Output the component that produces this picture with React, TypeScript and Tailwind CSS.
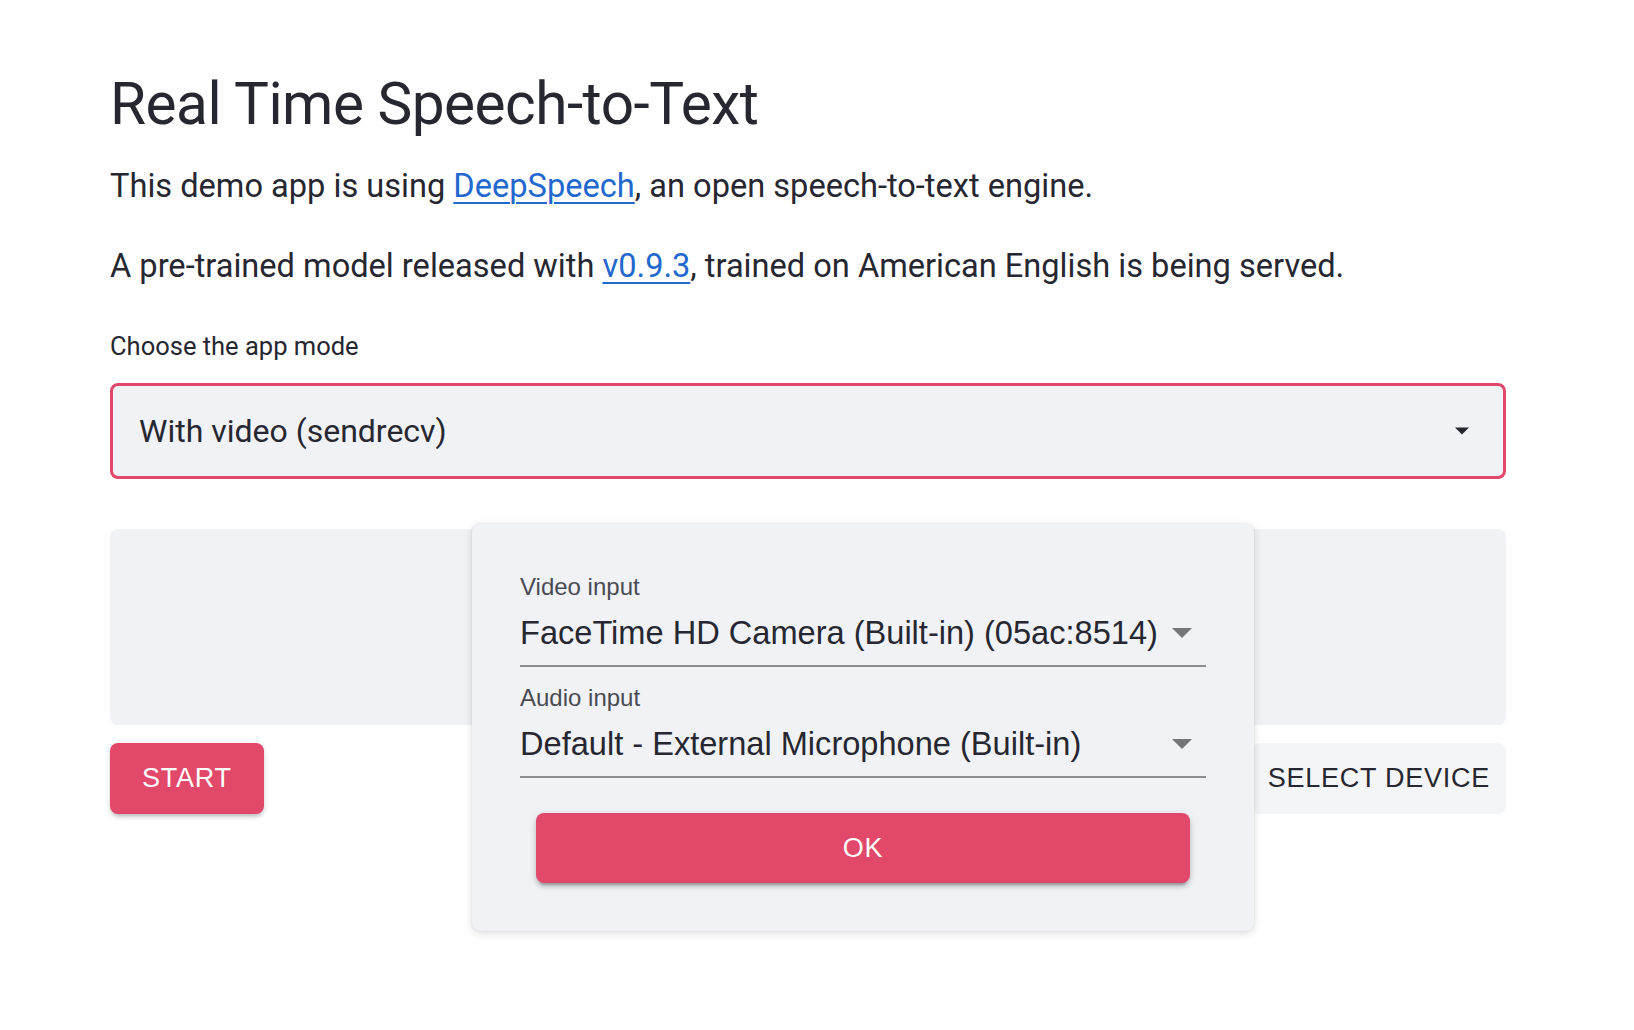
import * as React from 'react'

const plex = { fontFamily: 'Roboto, "Noto Sans", sans-serif' }

function DropArrow({ className }: { className?: string }) {
  return (
    <svg viewBox="7 10 10 5" className={className} aria-hidden>
      <path d="M7 10l5 5 5-5z" fill="currentColor" />
    </svg>
  )
}

function DeviceSelect({ label, value }: { label: string; value: string }) {
  return (
    <div className="flex flex-col">
      <div className="h-[28px] text-[24px] leading-[28px] text-[#4a4b52]">{label}</div>
      <div className="flex h-[66px] items-center justify-between border-b-2 border-[#8d8e92] pr-[14px]">
        <span className="text-[32.6px] leading-none text-[#262730]">{value}</span>
        <DropArrow className="h-[10px] w-[20px] text-[#75767a]" />
      </div>
    </div>
  )
}

export default function App() {
  return (
    <div className="min-h-[1030px] w-full bg-white text-[#262730]" style={plex}>
      <div className="relative ml-[110px] w-[1396px] pt-[68px]">
        <h1 className="text-[58.5px] font-normal leading-[72px] tracking-[-0.5px]">
          Real Time Speech-to-Text
        </h1>

        <p className="mt-[22px] text-[32.6px] leading-[48px]">
          This demo app is using{' '}
          <a href="#" className="text-[#2268cf] underline decoration-[2px] underline-offset-[5px]">
            DeepSpeech
          </a>
          , an open speech-to-text engine.
        </p>

        <p className="mt-[32px] text-[32.6px] leading-[48px]">
          A pre-trained model released with{' '}
          <a href="#" className="text-[#2268cf] underline decoration-[2px] underline-offset-[5px]">
            v0.9.3
          </a>
          , trained on American English is being served.
        </p>

        <div className="mt-[36px] text-[25.5px] leading-[40px]">Choose the app mode</div>

        <div className="mt-[17px] flex h-[96px] items-center justify-between rounded-[8px] border-[3px] border-[#e1486a] bg-[#f0f2f6] pl-[26px] pr-[34px]">
          <span className="text-[32px] leading-none">With video (sendrecv)</span>
          <DropArrow className="h-[8px] w-[14px] text-[#262730]" />
        </div>

        <div className="mt-[50px] h-[196px] rounded-[8px] bg-[#f0f2f6]" />

        <div className="mt-[18px] flex items-center justify-between" style={{ fontFamily: '"Liberation Sans", Arial, sans-serif' }}>
          <button className="h-[71px] rounded-[8px] bg-[#e1486a] px-[32px] text-[27px] tracking-[0.75px] text-white shadow-[0_4px_4px_-2px_rgba(0,0,0,0.2),0_2px_6px_rgba(0,0,0,0.14)]">
            START
          </button>
          <button className="h-[71px] rounded-[8px] bg-[#f4f5f6] px-[16px] text-[27px] tracking-[0.75px] text-[#262730]">
            SELECT DEVICE
          </button>
        </div>

        <div
          className="absolute left-[362px] top-[524px] w-[782px] rounded-[8px] bg-[#f0f2f6] px-[48px] pb-[48px] pt-[49px] shadow-[0_2px_8px_rgba(0,0,0,0.14),0_0_2px_rgba(0,0,0,0.1)]"
          style={{ fontFamily: '"Liberation Sans", Arial, sans-serif' }}
        >
          <DeviceSelect label="Video input" value="FaceTime HD Camera (Built-in) (05ac:8514)" />
          <div className="mt-[17px]">
            <DeviceSelect label="Audio input" value="Default - External Microphone (Built-in)" />
          </div>
          <div className="mt-[35px] px-[16px]">
            <button className="h-[70px] w-full rounded-[8px] bg-[#e1486a] text-[27px] tracking-[0.75px] text-white shadow-[0_6px_2px_-4px_rgba(0,0,0,0.2),0_4px_4px_rgba(0,0,0,0.14),0_2px_10px_rgba(0,0,0,0.12)]">
              OK
            </button>
          </div>
        </div>
      </div>
    </div>
  )
}
